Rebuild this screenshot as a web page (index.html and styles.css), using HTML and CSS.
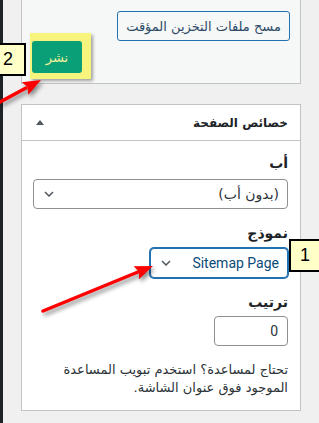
FILE: index.html
```html
<!DOCTYPE html>
<html lang="ar">
<head>
<meta charset="utf-8">
<link rel="stylesheet" href="styles.css">
</head>
<body>
<div class="app">
  <div class="rail"></div>
  <main class="side">
    <section class="box publish-box" dir="rtl">
      <div class="cache-row"><button class="btn-secondary">مسح ملفات التخزين المؤقت</button></div>
      <div class="publish-row"><button class="btn-publish">نشر</button></div>
    </section>
    <section class="box attrs" dir="rtl">
      <div class="box-head">
        <h2 class="box-title">خصائص الصفحة</h2>
        <span class="toggle"></span>
      </div>
      <div class="box-body">
        <p class="field-label label-parent">أب</p>
        <div class="select"><span class="sel-text">(بدون أب)</span><svg class="chev" width="10" height="6" viewBox="0 0 10 6"><path d="M1 1 L5 5 L9 1" /></svg></div>
        <p class="field-label label-template">نموذج</p>
        <div class="select narrow focused"><span class="sel-text latin">Sitemap Page</span><svg class="chev" width="10" height="6" viewBox="0 0 10 6"><path d="M1 1 L5 5 L9 1" /></svg></div>
        <p class="field-label label-order">ترتيب</p>
        <div class="num-input"><span class="latin">0</span></div>
        <p class="help">تحتاج لمساعدة؟ استخدم تبويب المساعدة<br>الموجود فوق عنوان الشاشة.</p>
      </div>
    </section>
  </main>
  <div class="halo"></div>
  <div class="badge badge-2">2</div>
  <div class="badge badge-1">1</div>
  <svg class="arrows" width="319" height="423" viewBox="0 0 319 423">
    <g class="arrow">
      <line x1="43" y1="311" x2="138" y2="272" />
      <polygon points="153,266 138.9,279.3 139.1,271.7 133.6,266.3" />
    </g>
    <g class="arrow">
      <line x1="-5" y1="104.7" x2="26" y2="88" />
      <polygon points="41,80 28.4,94.7 27.7,87.1 21.8,82.3" />
    </g>
  </svg>
</div>
</body>
</html>
```

FILE: styles.css
```css
* { box-sizing: border-box; }
html, body { margin: 0; padding: 0; background: #f0f0f1; }
body { width: 319px; height: 423px; overflow: hidden; font-family: "DejaVu Sans", sans-serif; }

.app { position: relative; display: flex; height: 423px; }
.rail { width: 3px; flex: none; background: #1d2327; }
.side { margin-left: 18px; width: 280px; display: flex; flex-direction: column; gap: 20px; }

.box { border: 1px solid #c3c4c7; }
.publish-box { border-top: none; background: #f6f7f7; padding: 11px 10px 10px; }
.cache-row { display: flex; justify-content: flex-start; }
.publish-row { display: flex; justify-content: flex-end; }

.btn-secondary {
  width: 173px; height: 30px; padding: 0;
  border: 1px solid #2271b1; border-radius: 3px;
  background: #f6f7f7; color: #2c4a66;
  font: 13px "DejaVu Sans", sans-serif;
}
.btn-publish {
  position: relative; z-index: 2;
  width: 50px; height: 32px; padding: 0;
  border: none; border-radius: 3px;
  background: #0b9f77; color: #f1f19a;
  font: 13px "DejaVu Sans", sans-serif;
}

.attrs { background: #fff; }
.box-head {
  height: 36px; display: flex; align-items: center; justify-content: space-between;
  padding: 0 12px 0 14px; border-bottom: 1px solid #c3c4c7;
}
.box-title { margin: 0; font: bold 12px "DejaVu Sans", sans-serif; color: #1d2327; }
.toggle { width: 0; height: 0; border-left: 4px solid transparent; border-right: 4px solid transparent; border-bottom: 5px solid #50575e; }

.box-body { padding: 12px 12px 13px 11px; }
.field-label { margin: 14px 0 5px; font: bold 14px/20px "DejaVu Sans", sans-serif; color: #1d2327; }
.label-parent { margin: 0 0 6px; }
.label-order { margin-bottom: 4px; }

.select {
  height: 30px; display: flex; align-items: center; justify-content: space-between;
  padding: 0 8px 0 10px; border: 1px solid #8c8f94; border-radius: 4px; background: #fff;
  font: 14px "DejaVu Sans", sans-serif; color: #2c3338;
}
.select.narrow { width: 138px; }
.select.focused { border-color: #2271b1; box-shadow: 0 0 0 1px #2271b1; color: #0a4b78; }
.chev { fill: none; stroke: #50575e; stroke-width: 1.5; }
.latin { font-family: Roboto, "Liberation Sans", sans-serif; font-size: 14px; }

.num-input {
  width: 74px; height: 30px; display: flex; align-items: center; padding: 0 9px;
  border: 1px solid #8c8f94; border-radius: 4px; background: #fff; color: #2c3338;
}
.help { margin: 15px 0 0; font: 13px/18px "DejaVu Sans", sans-serif; color: #2c3338; }

.halo {
  position: absolute; z-index: 1; left: 30px; top: 33px; width: 61px; height: 46px;
  background: #f6f47c; box-shadow: 2px 2px 3px rgba(0,0,0,0.35);
}
.badge {
  position: absolute; z-index: 3; height: 33px;
  background: #ffffc8; border: 2px solid #000;
  font: 18px/29px "Liberation Sans", Arial, sans-serif; color: #000;
}
.badge-2 { left: -10px; top: 43px; width: 36px; text-align: center; padding-left: 0; }
.badge-1 { left: 289px; top: 239px; width: 34px; padding-left: 9px; }

.arrows { position: absolute; left: 0; top: 0; z-index: 4; pointer-events: none; filter: drop-shadow(2px 3px 2px rgba(0,0,0,0.45)); }
.arrow line { stroke: #f00; stroke-width: 3.5; stroke-linecap: round; }
.arrow polygon { fill: #f00; }
```
